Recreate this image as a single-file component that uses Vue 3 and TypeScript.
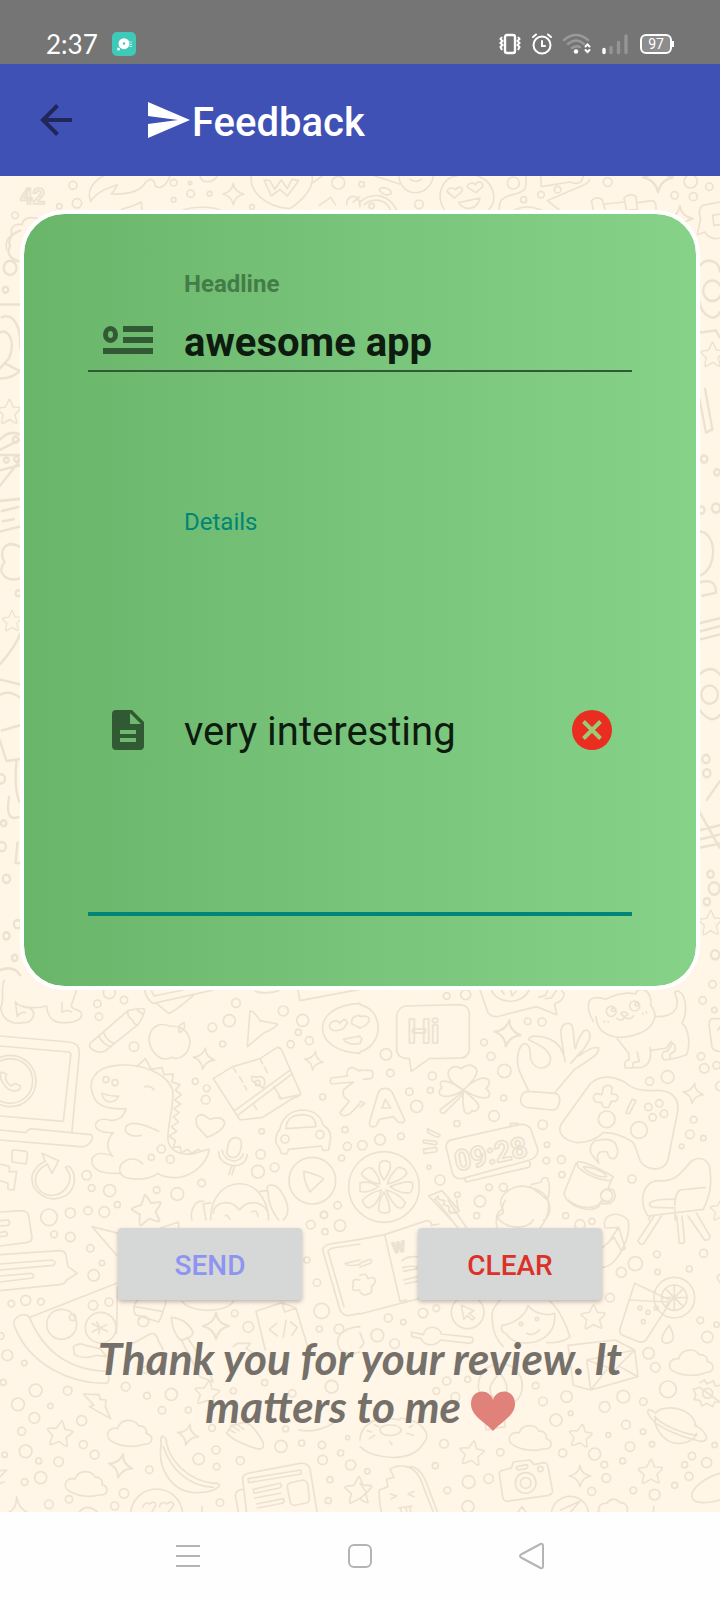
<script setup lang="ts">
import { ref } from 'vue'

type Dot = [number, number, number]
interface Stamp {
  shape: 'sparkle' | 'star' | 'cloud'
  x: number
  y: number
  size: number
  turn: number
}
interface Label {
  text: string
  x: number
  y: number
  size: number
  turn: number
}
interface Patch {
  place: string
  dots: Dot[]
  lines: string[]
  stamps: Stamp[]
  labels: Label[]
}

const headline = ref('awesome app')
const details = ref('very interesting')

function clearAll(): void {
  headline.value = ''
  details.value = ''
}

const shapes: Record<Stamp['shape'], string> = {
  sparkle: 'M0 -32Q3 -6 32 0Q6 5 0 32Q-5 6 -32 0Q-5 -5 0 -32Z',
  star: 'M0 -42Q3 -44 13 -17L38 -15Q44 -12 21 8L28 34Q28 41 2 24L-24 38Q-31 38 -22 9L-41 -8Q-44 -14 -14 -16Z',
  cloud: 'M-52 30C-76 20 -70 -12 -38 -10C-30 -44 14 -42 24 -22C44 -26 52 -8 48 -2C76 6 70 32 44 32C20 44 -24 44 -52 30Z',
}

const st = (shape: Stamp['shape'], x: number, y: number, size = 1, turn = 0): Stamp => ({ shape, x, y, size, turn })

const patches: Patch[] = [
  {
    place: 'translate(0 170) scale(.3333)',
    dots: [[219, 46, 12], [231, 100, 14], [178, 109, 8], [45, 136, 10], [521, 38, 10], [570, 39, 5], [572, 71, 11], [629, 71, 7], [521, 89, 7], [756, 111, 7], [1015, 38, 19]],
    lines: [
      'M310 18C270 40 262 70 272 94C290 66 320 56 352 44C345 60 336 70 334 72C390 74 425 60 436 38C450 22 462 26 466 48C480 60 500 46 510 18',
      'M600 18C604 42 640 40 652 18M545 122C580 108 640 108 668 124M364 118L398 108L424 96L426 120',
      'M754 18C748 60 790 110 870 116C910 90 944 50 936 18M936 40L966 18',
      'M792 30L814 78L840 58L862 78L896 32L876 28L862 56L844 30L824 58L810 32Z',
      'M20 240C14 210 28 200 36 196C28 170 44 160 66 164C70 138 100 140 124 150',
      'M958 106L992 82L1006 104M1040 104C1036 76 1080 64 1080 110M1080 80L1060 96',
    ],
    stamps: [st('sparkle', 700, 72)],
    labels: [{ text: '42', x: 60, y: 102, size: 66, turn: 0 }],
  },
  {
    place: 'translate(360 170) scale(.3333)',
    dots: [[5, 43, 8], [177, 103, 13], [460, 39, 18], [543, 74, 10], [491, 89, 9], [593, 59, 10], [743, 36, 13], [992, 34, 20], [1048, 50, 11], [944, 76, 11], [1000, 80, 12], [35, 108, 8]],
    lines: [
      'M44 18L118 42M116 18C124 86 210 84 220 18M150 28Q170 40 184 28',
      'M58 60C60 46 92 54 94 70C80 80 66 72 58 60Z',
      'M0 96C40 62 90 74 110 122M12 104C44 80 82 90 92 122',
      'M254 122C222 70 252 22 290 18M352 18C402 34 416 90 384 122M262 66C262 50 284 52 286 60C298 44 314 54 304 66L284 84ZM322 52C322 36 344 38 346 44C358 28 374 38 366 52L348 68ZM296 98L360 84C354 118 314 126 296 98Z',
      'M498 18C500 60 500 64 450 76C416 88 418 100 418 122M460 122Q500 100 548 122M542 18L544 50L630 36Q664 50 670 18M688 28Q690 40 650 54L562 92L598 120',
      'M694 92Q710 78 726 88L736 120M700 120L694 92M734 102L794 96M792 84Q810 66 828 80L832 118L800 122ZM832 98L878 92Q890 96 888 120',
      'M1080 96L1028 106Q1012 120 1022 146L1012 194L1034 186Q1052 212 1080 204M1080 132L1058 136L1062 166L1080 164',
    ],
    stamps: [st('sparkle', 894, 22, 1.4), st('sparkle', 960, 146, 1.2)],
    labels: [],
  },
  {
    place: 'translate(0 980) scale(.3333)',
    dots: [[292, 71, 11], [328, 38, 18], [372, 60, 11], [297, 110, 11], [402, 200, 14], [708, 69, 13], [637, 142, 13], [688, 122, 18], [668, 192, 9], [850, 93, 15], [908, 121, 18], [895, 157, 9], [872, 193, 11], [928, 182, 12], [586, 304, 9], [620, 325, 10], [617, 359, 13], [968, 351, 9], [785, 454, 8], [484, 507, 12], [454, 532, 9], [511, 538, 12], [782, 523, 14], [774, 575, 19], [824, 562, 13], [605, 609, 11], [260, 586, 14], [275, 624, 10], [329, 632, 18], [352, 674, 9], [470, 630, 10], [532, 642, 19], [1035, 449, 9], [1042, 499, 12], [1025, 534, 9], [1013, 676, 11], [972, 705, 10], [211, 699, 15], [264, 692, 12], [313, 696, 16], [147, 712, 25], [31, 303, 77], [31, 303, 67], [318, 299, 9], [345, 308, 9], [937, 602, 70], [773, 309, 8], [855, 477, 12], [960, 464, 12]],
    lines: [
      'M12 0C0 30 16 60 2 82C4 116 36 136 66 128C98 130 112 100 90 84Q60 82 46 66L52 110Q62 94 76 98M66 78Q100 88 140 78C142 108 158 128 188 128C222 128 250 120 244 98C234 84 214 92 214 76L230 30M186 68L186 96Q204 88 214 96',
      'M270 190L384 92Q426 82 434 88Q434 104 414 134L314 214C290 222 264 206 270 190ZM384 92Q380 110 398 120Q402 136 414 134M296 168Q310 196 334 200M310 156Q320 184 344 190M412 90L430 104',
      'M508 138C460 118 430 170 458 212C478 240 500 240 516 232C540 244 570 220 570 182C562 144 536 138 508 138ZM538 158Q530 136 552 128Q560 146 538 158Z',
      'M434 30Q440 60 460 70L640 30M454 32L462 48L550 30M470 70L506 100Q520 98 580 46',
      'M742 200L750 94Q760 90 780 122L832 132Q836 138 790 160Z',
      'M0 168L208 186Q240 190 238 220L216 454M0 198L206 216Q214 218 212 228L190 424L0 408M0 450L76 458L90 446L272 464Q280 466 276 480L266 492Q256 502 240 500L0 480',
      'M4 276C-4 290 8 316 26 328C44 338 62 332 62 318L44 310L34 318Q18 308 16 292L20 282Z',
      'M378 386C342 388 296 384 282 352C260 308 280 262 350 256C420 250 500 276 518 330C524 380 500 440 504 480C508 516 550 528 584 520Q614 510 628 508C620 560 560 600 510 592Q482 588 474 580C440 604 370 604 360 576C350 546 400 520 428 552M378 386Q370 420 334 422Q304 412 290 426C276 448 306 460 340 458C316 484 320 510 338 528Q290 510 276 536C272 574 310 582 360 580M306 340Q330 350 356 348Q346 370 322 364Q308 358 306 340ZM434 320Q452 316 462 330M424 466C390 474 370 456 378 440C394 420 440 436 476 454',
      'M410 260L436 236L454 268L486 262L492 284L520 282L516 306L540 314L526 330L544 344L524 360L542 372L522 386L538 398L520 410L536 426L514 440L530 454L508 468L526 482L520 502L540 500L544 518L564 508L574 520L596 508L604 514',
      'M640 296L698 260L780 236L832 202Q842 202 846 212L902 340Q900 350 880 354L788 412L720 420ZM704 392L868 272M716 404L876 282M822 320L844 356L902 344M790 324L758 304Q748 282 766 292Q796 284 794 310Z',
      'M698 260L708 276M718 290L728 306M734 318L740 330M780 236L788 252M794 262L802 278M762 376L770 388M836 348L842 358',
      'M622 472L592 440Q580 404 608 404Q624 412 630 418Q668 406 674 428Q672 452 622 472Z',
      'M686 490Q694 466 718 476Q730 486 720 516C710 540 684 536 680 516ZM656 514C654 562 736 576 742 524M666 510C672 548 720 554 730 522M696 556L686 584M704 558L696 584',
      'M840 446C846 410 876 390 910 390C950 392 964 414 970 436Q998 452 990 486L986 510L970 512L964 498L866 508L860 522L844 520L838 504Q816 480 840 446ZM858 446C860 412 880 406 908 404C940 406 946 420 948 440Z',
      'M36 516Q36 508 46 510L78 514Q84 516 82 528L78 552L36 546ZM0 552L28 560L28 576L50 574L42 630L24 628L24 610L0 602',
      'M126 520L176 542L156 580L142 552C108 570 94 600 118 630C140 654 180 650 198 624C218 598 210 580 196 562Q204 554 214 566C234 600 220 640 186 652C140 668 90 634 96 588Q106 556 136 544Z',
      'M912 574Q910 602 930 636L970 598Q970 590 912 574Z',
      'M1080 274L1056 262Q1038 264 1042 288L994 294Q986 302 996 312L1060 306L1030 330Q1024 350 1048 364L1020 398Q1026 414 1050 402L1080 370',
      'M1080 70C930 76 930 214 1080 220M1030 146C990 164 976 134 1000 124Q1014 120 1020 130Q1036 108 1042 130ZM1030 178L1080 168M1030 178Q1044 198 1080 190M1080 106Q1050 108 1056 132L1080 144',
      'M632 720C630 580 800 570 806 720M640 700C640 664 694 656 718 690C750 650 800 670 806 706M632 668L610 672L618 720M610 664C580 660 570 700 576 720M780 634L804 632C790 610 826 610 840 630C866 666 872 700 850 720M804 636Q804 680 836 720M676 708Q680 700 690 718M756 696Q772 686 774 710',
      'M894 30L900 62L1080 28M766 34Q800 44 836 32',
    ],
    stamps: [st('sparkle', 612, 236, 1, 8), st('sparkle', 942, 242, 0.9, 10)],
    labels: [],
  },
  {
    place: 'translate(360 980) scale(.3333)',
    dots: [[78, 223, 17], [91, 279, 11], [372, 187, 10], [393, 229, 12], [217, 288, 12], [211, 331, 9], [148, 335, 11], [170, 379, 18], [433, 273, 20], [431, 354, 9], [402, 408, 16], [291, 431, 9], [548, 434, 14], [60, 479, 16], [123, 469, 10], [7, 496, 14], [207, 562, 6], [240, 600, 15], [292, 644, 8], [387, 622, 10], [430, 622, 12], [360, 664, 17], [350, 707, 9], [561, 494, 8], [559, 542, 10], [604, 539, 12], [606, 584, 9], [816, 597, 12], [617, 707, 9], [503, 124, 10], [546, 126, 12], [317, 44, 15], [260, 48, 10], [869, 304, 12], [923, 291, 19], [1023, 229, 11], [1033, 265, 14], [1070, 256, 11], [1058, 13, 11], [1028, 61, 11], [1063, 90, 8], [1001, 419, 10], [990, 463, 13], [1030, 474, 8], [965, 499, 7], [740, 418, 25], [837, 450, 25], [898, 370, 11], [865, 381, 11], [912, 401, 11], [878, 412, 11], [754, 94, 15], [824, 78, 15], [760, 89, 5], [830, 73, 5], [740, 647, 18], [72, 621, 106]],
    lines: [
      'M140 78L300 74Q326 76 328 100L328 210Q324 234 300 234L208 236L154 274L148 236Q112 236 110 210L110 110Q112 80 140 78Z',
      'M0 74C70 90 76 190 0 216M0 110Q28 104 28 120Q26 134 0 144M0 190L6 176L0 172',
      'M310 330C270 310 260 286 266 272Q280 252 304 266Q330 244 350 268Q356 290 310 330C340 300 370 286 386 300Q392 312 378 326Q396 340 384 352Q360 360 310 330C330 350 360 368 356 382Q350 398 336 392Q324 408 314 396Q306 370 310 330C280 352 246 354 238 340Q236 330 246 324Q236 310 246 304Q270 300 310 330ZM306 338L240 390Q242 404 254 398L310 342',
      'M360 30L384 98Q394 114 420 108L530 80L590 104L584 72Q614 60 612 40L604 30M394 30C410 70 480 80 508 30M424 30L432 42M452 30L456 48L468 34M536 52L556 46L564 30M556 56L574 54L590 30',
      'M506 334C490 290 460 264 478 208Q488 184 502 194C514 206 510 220 512 238C526 276 570 270 572 236C566 200 520 190 506 178Q510 164 542 170C590 176 610 206 616 246M612 220C600 160 596 128 626 130C646 130 638 180 646 206Q656 170 672 152Q690 146 690 170C688 190 668 210 656 228Q700 196 716 204Q718 220 690 238L644 268L586 336M632 250L664 214M506 334L586 340Q604 346 598 368Q594 392 576 390L500 382Q480 376 482 358Q484 334 506 334Z',
      'M700 124C680 90 680 60 700 54Q720 50 736 58Q790 32 826 42Q836 20 860 34Q876 50 872 76C900 110 880 150 820 166C760 184 710 160 708 110M782 100Q796 90 804 104L792 110ZM770 114Q784 128 794 112Q810 122 820 108M732 124L734 126M744 124L746 126M848 100L850 102M858 96L860 98M886 110C950 112 962 78 944 38Q956 24 970 48Q986 90 966 130C990 150 990 200 980 224Q950 236 912 240C900 226 910 210 922 214Q940 190 934 184M772 176L806 220L808 240Q790 240 796 264L846 262Q880 250 870 202M832 216L838 244L820 248L818 264M870 212L920 204L930 188Q950 190 944 214L930 222L930 236',
      'M604 432L690 312Q730 274 794 306Q820 334 880 332C940 326 964 360 950 410L924 540Q914 570 880 566C826 558 842 520 818 486Q770 456 730 458Q700 488 650 488C610 480 590 460 604 432ZM730 322Q746 310 756 322L754 342L770 344Q780 354 766 364L754 364L746 382Q726 388 726 368L708 366Q692 354 708 340L726 344ZM816 358L828 362L808 402L798 398Z',
      'M80 326Q62 322 54 340L28 430Q30 446 48 438L58 418L100 410L114 426Q134 432 134 420L98 340Q92 328 80 326ZM66 384L76 358L92 384ZM0 270L36 272Q44 290 32 296L10 298M0 382L14 370L0 364',
      'M258 500Q260 480 280 478L476 434Q500 430 512 446L534 510Q532 532 510 540L306 596Q286 598 278 582ZM314 596L318 606L506 562Q516 552 508 546M450 438L452 430L474 430',
      'M202 446L240 464Q240 474 228 470L204 458ZM190 480L228 484Q236 494 222 494L190 488ZM190 508L226 502Q238 508 226 516L192 520Z',
      'M60 548Q74 536 90 548Q96 570 72 600Q52 574 60 548ZM114 562Q142 564 140 582Q124 602 82 612Q88 586 114 562ZM90 620Q140 600 158 608Q160 632 150 638Q118 642 90 620ZM78 630Q118 640 136 668Q130 690 112 682Q92 664 78 630ZM72 636Q92 674 88 696Q70 704 56 692Q54 664 72 636ZM64 630Q56 672 28 684Q10 680 8 660Q32 636 64 630ZM56 620Q20 642 0 634V608Q30 602 56 620ZM60 612Q20 606 4 582Q16 560 34 564Q58 586 60 612Z',
      'M206 648L246 632L298 692L286 700L266 694L268 680L250 674L254 662L236 658L234 648L220 662M206 648L274 720',
      'M430 690C400 650 460 610 500 620C550 630 568 650 570 688Q564 720 550 720M514 614L544 606Q544 590 562 594Q574 620 564 654M510 620Q540 640 560 658M424 690Q408 700 410 720',
      'M648 550L612 640C620 680 690 700 716 680L726 660M746 622L756 596M652 546C680 540 740 580 760 590Q756 606 736 600C700 596 644 566 652 546ZM670 560C700 560 740 580 740 590C720 594 676 574 670 560ZM724 640Q740 618 760 630C776 660 750 680 720 668M716 550L702 532C680 510 694 480 720 480Q750 474 766 490Q782 520 764 536Q744 538 742 516Q714 510 712 530Z',
      'M848 660Q850 610 890 602C960 610 970 560 1000 540Q1030 526 1048 556C1060 620 1044 660 1030 688L864 708Q850 690 848 660ZM944 676Q946 640 960 630L1036 622M944 658Q880 656 868 670Q868 684 888 682L946 684M944 690L946 720M870 710L866 720',
      'M1080 116L1056 116Q1046 120 1048 140L1056 200Q1060 214 1080 214M1080 304Q1064 310 1068 326L1080 334M1080 140L1074 150',
    ],
    stamps: [st('sparkle', 443, 160, 1.25, 8), st('sparkle', 1000, 340, 0.95, 8), st('star', 1084, 690, 0.8)],
    labels: [
      { text: 'Hi', x: 142, y: 188, size: 100, turn: 0 },
      { text: '09:28', x: 290, y: 574, size: 86, turn: -12 },
    ],
  },
  {
    place: 'translate(0 1200) scale(.3333)',
    dots: [[162, 103, 10], [211, 111, 14], [271, 145, 11], [306, 189, 8], [281, 226, 17], [34, 311, 10], [77, 301, 15], [123, 305, 10], [279, 316, 14], [327, 306, 12], [185, 373, 45], [218, 352, 10], [302, 383, 46], [22, 466, 16], [73, 489, 8], [2, 408, 10], [10, 547, 9], [54, 613, 19], [107, 571, 19], [203, 572, 13], [151, 618, 8], [103, 654, 16], [65, 694, 12], [245, 662, 15], [250, 734, 12], [284, 764, 13], [77, 754, 19], [14, 764, 8], [176, 785, 14], [116, 783, 9], [122, 833, 18], [74, 846, 10], [207, 898, 11], [147, 913, 13], [372, 880, 14], [344, 918, 12], [377, 560, 13], [441, 587, 10], [436, 509, 10], [514, 583, 18], [486, 631, 11], [565, 630, 9], [636, 684, 10], [648, 750, 12], [596, 777, 17], [650, 800, 10], [721, 782, 12], [448, 809, 11], [660, 908, 11], [745, 381, 16], [704, 340, 10], [965, 333, 23], [958, 387, 9], [1017, 387, 14], [951, 248, 11], [921, 180, 9], [700, 573, 9], [794, 548, 9], [877, 580, 11], [857, 687, 9], [843, 739, 18], [905, 729, 9], [966, 735, 11], [968, 780, 14], [1022, 759, 9], [1043, 713, 6], [1052, 795, 15], [990, 839, 9], [985, 902, 9], [995, 560, 19], [932, 74, 13], [972, 44, 11], [1020, 77, 17], [975, 95, 9], [430, 364, 16], [470, 945, 78]],
    lines: [
      'M0 36L66 32Q84 34 86 48L96 112Q96 126 80 128L0 138M0 62L24 60Q34 68 24 76L0 78M0 98L16 94Q28 102 18 108L0 110',
      'M0 164L178 152Q196 152 198 166L204 200L232 220L200 240Q196 252 178 254L0 272M0 192L156 180Q172 186 160 196L0 210M0 228L92 220Q106 226 98 234L0 246',
      'M350 166L276 80L356 100M482 84L536 66L536 84M350 250L90 352M352 260L350 400M44 380C30 350 80 330 90 356C130 450 200 510 320 514Q334 540 320 550C220 552 90 500 44 380ZM276 370L300 384L320 374M276 396L300 384L296 402M300 384L322 394M300 384L290 366M220 440Q240 426 256 436L300 446L320 470L290 466Q250 480 224 464Z',
      'M412 302Q394 320 406 344L476 366Q490 340 498 304M406 320L486 334M416 360Q426 340 446 360M546 304C570 340 680 340 700 304M400 430L450 402Q470 396 474 420L490 450',
      'M514 352Q518 400 542 420Q584 412 578 394Q560 356 514 352ZM544 420L600 530L640 546L620 500L562 412',
      'M768 334L846 308L888 324L924 444M768 334L796 450M846 308L854 336L888 324M830 370L808 388L832 408M872 366L892 382L876 406M858 362L850 412M700 440L712 430L752 430L738 446L760 460',
      'M968 150Q970 136 990 132L1080 118M968 150L1020 330Q1030 350 1050 346L1080 340M984 154L1032 320M984 154Q988 146 1000 144L1080 132M1036 190L1080 180M1036 192Q1040 200 1080 194M1080 240Q1054 232 1060 256Q1050 276 1080 270M1080 380C1024 384 1000 414 1020 448Q1040 468 1080 456',
      'M250 582L298 584L300 598L318 600L316 620L332 656L268 620L282 616Z',
      'M486 708Q480 720 484 730C470 800 510 870 580 878Q640 880 658 858Q660 848 640 850C560 840 510 780 500 730Q498 708 486 708ZM490 740C510 800 560 860 640 862',
      'M680 700L696 676L716 672Q740 660 760 684C790 720 800 742 780 748C740 740 700 720 680 700ZM686 688L706 698M692 676L718 692M706 670L732 688',
      'M740 940L728 836Q728 824 744 820L900 790Q924 788 930 806L952 940M744 836L902 810L904 822L746 848ZM760 868L840 850Q850 858 838 864L762 880ZM764 894L842 880M770 912L850 896Q856 902 848 910L772 924M862 862Q860 850 880 846L910 840Q922 842 924 856L928 896Q928 908 914 910L886 916Q872 918 870 902ZM716 940L706 886Q708 868 732 868',
      'M428 922Q434 904 448 912Q464 900 468 914L454 940M478 920Q484 900 500 912Q516 900 522 914L502 940M0 812L20 810L0 830M0 850L12 846M20 940Q50 930 50 890Q56 930 90 940M238 936Q260 908 292 936M606 940V920M896 690Q950 700 1000 670',
    ],
    stamps: [st('sparkle', 648, 378, 1.25), st('sparkle', 564, 704, 1, 12), st('sparkle', 362, 798, 1.15, 12), st('star', 180, 702, 0.95, 8), st('star', 622, 580, 0.9, 8), st('star', 1076, 872, 1), st('star', 442, 30, 1.1, -10), st('cloud', 390, 698, 1, 4), st('cloud', 260, 850, 0.95, 6)],
    labels: [],
  },
  {
    place: 'translate(360 1200) scale(.3333)',
    dots: [[660, 74, 15], [696, 64, 9], [784, 217, 15], [826, 191, 21], [891, 163, 10], [893, 216, 8], [988, 207, 9], [1031, 160, 12], [750, 293, 13], [85, 354, 12], [130, 366, 8], [189, 339, 14], [229, 325, 10], [52, 406, 19], [104, 431, 14], [323, 337, 49], [1021, 361, 10], [1070, 374, 8], [1042, 411, 17], [886, 502, 14], [866, 460, 17], [924, 568, 25], [850, 605, 11], [790, 590, 19], [734, 621, 16], [798, 674, 13], [849, 695, 8], [876, 733, 8], [810, 740, 14], [745, 705, 7], [788, 783, 9], [733, 794, 10], [704, 762, 18], [608, 759, 12], [588, 660, 18], [632, 640, 7], [620, 590, 17], [549, 604, 13], [527, 557, 10], [252, 731, 13], [421, 757, 11], [226, 797, 9], [386, 836, 14], [326, 846, 19], [262, 871, 10], [22, 814, 8], [324, 920, 18], [695, 874, 12], [739, 834, 13], [820, 871, 10], [884, 884, 16], [944, 856, 9], [987, 829, 12], [974, 794, 9], [996, 768, 11], [1040, 788, 15], [1064, 735, 8], [260, 543, 12], [323, 538, 9], [229, 573, 10], [286, 591, 13], [483, 372, 5], [531, 357, 5], [497, 849, 31], [497, 849, 16], [541, 807, 8], [421, 557, 66], [943, 293, 61], [943, 293, 38], [840, 324, 6], [889, 324, 6], [864, 337, 6], [850, 365, 6], [1043, 580, 15], [630, 945, 56]],
    lines: [
      'M0 118L74 104L200 62Q216 62 214 76L236 72M74 104L120 304M0 342L200 290M0 190L30 178Q40 180 30 190L0 202M120 304L140 300M126 182Q140 168 172 170M128 204Q140 196 172 200M130 214L172 206M132 240L172 230M134 252L172 244',
      'M0 226Q20 216 24 236Q46 226 46 246Q40 258 34 258Q40 280 24 282Q10 290 0 276M0 398L12 430L0 444',
      'M228 0L294 84M264 0L320 84M270 40L296 34L290 0',
      'M412 84Q400 50 430 40C420 10 440 0 436 0M564 0C570 30 560 60 540 84M410 50C440 90 500 90 520 60M624 0C660 30 710 30 730 0L750 10M736 84C720 40 780 30 804 60C816 110 770 200 728 202M736 84L776 82L796 146L784 152L762 112L728 142M776 82L744 130',
      'M884 46L834 122Q840 138 852 130L904 48M950 48L958 128Q970 134 974 124L966 48M984 48L1034 120Q1050 122 1050 108L1010 40',
      'M304 316L342 332L328 340L344 354L336 360L322 346L312 358Z',
      'M420 302C390 330 396 350 398 370Q400 410 430 440M426 376C470 370 500 340 504 316C520 340 560 350 584 340C590 400 540 440 470 426Q446 416 440 402Q420 396 426 376ZM500 400Q520 410 538 390M570 304C600 330 620 380 630 410Q610 430 560 428',
      'M154 396L190 404C200 370 240 380 244 402L336 412Q346 424 330 430L242 420C220 444 190 434 184 416L156 410Z',
      'M824 250L934 302L858 420Q846 430 832 424L788 406Q776 400 780 386ZM806 300L926 306M943 255V331M905 293H981M916 266L970 320M916 320L970 266',
      'M928 376C900 410 900 430 922 430C950 424 940 400 928 376Z',
      'M624 436L766 420L824 450L834 530L692 570L640 556ZM680 480L824 450M680 480L692 570M680 480L764 510L824 450M692 570L740 510M834 530L780 500',
      'M1020 548L1034 540L1040 552L1060 542L1066 558L1080 556M1080 606L1064 606L1058 620L1040 610L1026 618L1020 602L1002 598L1008 584L1000 568L1020 562Z',
      'M886 650C880 690 920 734 960 730C1000 726 1010 706 1010 700M886 640C910 610 1000 620 1008 680M882 636Q860 620 864 640C880 680 960 710 1020 724Q1046 724 1038 706Q1028 688 1004 674M884 650C900 670 960 700 1010 706',
      'M390 560Q406 530 420 520Q446 550 440 580Q450 608 420 606Q390 600 390 560ZM404 600L380 640M372 640L378 690L436 680L430 640',
      'M0 740C40 780 160 790 190 730C220 700 180 660 120 654M120 660C30 640 0 690 0 720M60 690C60 670 118 670 124 690C120 710 60 714 60 690ZM22 692L34 696M28 716L44 706M88 724L96 734M140 700L160 706M148 682L158 676M44 674L56 680',
      'M58 870Q56 900 64 936M58 870L84 860L80 838L102 832L90 808Q110 794 140 800Q176 810 190 860L220 936M150 800Q180 800 200 850L232 936M92 882L110 888L94 896M162 874L144 882L162 890M116 924L156 918M122 924L124 936M138 922L140 936M150 920L152 936',
      'M418 822Q418 812 430 810L454 804L460 786L510 780L522 794L550 788Q562 788 564 800L578 874Q576 884 566 886L442 904Q430 904 428 890ZM472 800L500 794Q508 800 498 806L474 810Q466 806 472 800Z',
      'M602 930L660 904L632 936M0 850L20 878L0 896M474 936L486 920L498 936M716 936Q714 908 740 910Q760 886 780 908Q806 908 802 936M880 936L882 920M1080 820C1040 830 980 870 1000 900Q1020 916 1080 900',
      'M1080 222Q1064 230 1080 248',
    ],
    stamps: [st('star', 700, 352, 0.9), st('star', 662, 708, 0.85, 8), st('star', 336, 760, 0.9, 8), st('star', 872, 816, 0.9), st('sparkle', 660, 828, 1), st('cloud', 512, 712, 0.95, 6), st('cloud', 994, 486, 0.98)],
    labels: [{ text: 'W', x: 100, y: 160, size: 44, turn: -10 }],
  },
  {
    place: 'translate(0 200) scale(.459 .51)',
    dots: [[22, 133, 14], [12, 176, 6], [34, 470, 6], [14, 510, 5], [36, 508, 5], [40, 771, 6], [2, 1135, 9], [8, 1222, 6], [4, 1268, 9], [14, 1331, 8], [38, 1420, 8], [14, 1443, 7], [32, 1486, 6], [1528, 608, 7], [1560, 604, 9], [1534, 508, 7], [1562, 534, 6], [1546, 970, 18], [1538, 1096, 8], [1540, 1124, 8], [1548, 1322, 7], [1556, 1350, 12], [1540, 1376, 7], [1558, 1480, 9], [1552, 178, 20]],
    lines: [
      'M44 60Q14 70 22 90Q10 110 40 120M0 205L44 205M4 230C30 220 46 250 44 290M0 260C20 250 34 280 20 310L0 330M0 350Q28 350 44 334M10 320L44 336',
      'M0 490L44 470M0 500L44 500M0 530L44 520M0 560L44 510M0 470Q20 450 44 460M0 590L44 586M4 610L40 602M6 630L30 626M0 650L44 640',
      'M44 680C10 664 -4 690 10 710C-10 730 14 750 44 742M0 910C20 890 36 870 44 850M0 940L44 950M0 970Q20 960 44 976M4 1040L44 1030M0 1060L14 1100L44 1096M36 1100Q30 1150 42 1180M20 1170Q10 1220 40 1210M38 1260L34 1300L44 1300M0 1510Q30 1500 44 1520',
      'M1524 130C1540 110 1568 120 1568 140M1524 200C1530 230 1560 240 1568 220M1526 260L1560 256L1568 270M1524 390L1538 456L1552 450L1536 370M1524 650C1560 650 1566 720 1526 736M1524 750Q1560 740 1560 770L1530 776M1524 830L1568 820M1524 846L1568 836M1524 862L1568 852M1524 930Q1550 910 1568 930M1524 1000Q1550 1030 1568 1010M1524 1200L1568 1270M1524 1236L1568 1226M1524 1254L1568 1244M1524 1270L1568 1262M1540 1176L1568 1140',
    ],
    stamps: [st('star', 20, 416, 0.6), st('star', 26, 826, 0.5), st('star', 1552, 304, 0.6), st('star', 1548, 1418, 0.6)],
    labels: [],
  },
]
</script>

<template>
  <div class="screen">
    <header class="status">
      <div class="status-side">
        <time class="clock">2:37</time>
        <svg class="icon24" viewBox="0 0 24 24" aria-hidden="true">
          <rect width="24" height="24" rx="5" fill="#3fc9b8" />
          <circle cx="12" cy="11.700" r="5.500" fill="#fff" />
          <circle cx="6.500" cy="17" r="1.500" fill="#fff" />
          <circle cx="12" cy="11.500" r="1.200" fill="#3fc9b8" />
          <path d="M17.500 10h2.500M18 12.500h2M17.500 14.500h2.500" stroke="#b9eee6" />
        </svg>
      </div>
      <div class="status-side status-icons">
        <svg width="24" height="24" viewBox="0 0 24 24" fill="none" stroke="#fff" aria-hidden="true">
          <rect x="7" y="3" width="10" height="18" rx="2" stroke-width="2.400" />
          <path d="M4 5L2.500 7L4.500 9L2.500 11L4.500 13L2.500 15L4 18M20 5L21.500 7L19.500 9L21.500 11L19.500 13L21.500 15L20 18" stroke-width="2" />
        </svg>
        <svg width="24" height="24" viewBox="0 0 24 24" fill="none" stroke="#fff" stroke-width="2" stroke-linecap="round" aria-hidden="true">
          <circle cx="12" cy="13" r="8.500" />
          <path d="M12 9v5h3M3 5l3-2.500M21 5l-3-2.500" />
        </svg>
        <svg width="30" height="24" viewBox="0 0 30 24" fill="none" stroke="#999" stroke-width="2.400" stroke-linecap="round" aria-hidden="true">
          <path d="M2 8Q14-2 26 8M6 12Q14 5 22 12M10 16q4-3 8-1" />
          <circle cx="14" cy="19.500" r="2.200" fill="#fff" stroke="none" />
          <path d="M23.500 14.500L25.500 12.500L27.500 14.500M23.500 18L25.500 20L27.500 18" stroke="#fff" stroke-width="2" />
        </svg>
        <svg width="28" height="24" viewBox="0 0 28 24" stroke="#959595" stroke-width="3.400" stroke-linecap="round" aria-hidden="true">
          <path d="M4 17.500v3" stroke="#fff" />
          <path d="M11 15.500v5M18.500 10.500v10M26 4v16.500" />
        </svg>
        <span class="battery">97</span>
      </div>
    </header>

    <nav class="toolbar">
      <button class="plain back" type="button" aria-label="Back">
        <svg width="32" height="32" viewBox="0 0 32 32" fill="none" stroke="#20285b" stroke-width="4" aria-hidden="true">
          <path d="M32 16H3M17.500 1.500L3 16l14.500 14.500" />
        </svg>
      </button>
      <svg class="plane" width="42" height="36" viewBox="0 0 42 36" fill="#fff" aria-hidden="true">
        <path d="M0 0L42 18L0 36V22L30 18L0 14Z" />
      </svg>
      <h1>Feedback</h1>
    </nav>

    <main>
      <svg class="wallpaper" viewBox="0 176 720 1336" preserveAspectRatio="xMidYMin slice" aria-hidden="true">
        <g v-for="(p, i) in patches" :key="i" :transform="p.place">
          <path v-for="(d, j) in p.lines" :key="'l' + j" :d="d" />
          <circle v-for="(c, j) in p.dots" :key="'d' + j" :cx="c[0]" :cy="c[1]" :r="c[2]" />
          <path
            v-for="(s, j) in p.stamps"
            :key="'s' + j"
            :d="shapes[s.shape]"
            :transform="`translate(${s.x} ${s.y}) rotate(${s.turn}) scale(${s.size})`"
          />
          <text
            v-for="(t, j) in p.labels"
            :key="'t' + j"
            :font-size="t.size"
            :transform="`translate(${t.x} ${t.y}) rotate(${t.turn})`"
          >{{ t.text }}</text>
        </g>
      </svg>

      <form class="form" @submit.prevent>
        <section class="card">
          <div class="field">
            <label class="strong" for="headline">Headline</label>
            <div class="row">
              <svg class="lead" width="50" height="28" viewBox="0 0 50 28" fill="#315934" aria-hidden="true">
                <path d="M20 0h30v6H20zM20 11h30v6H20zM0 22h50v6H0z" />
                <ellipse cx="7.500" cy="8.500" rx="5" ry="6" fill="none" stroke="#315934" stroke-width="5" />
              </svg>
              <input id="headline" v-model="headline" class="strong" type="text" />
            </div>
          </div>
          <div class="field details">
            <label for="details">Details</label>
            <div class="row">
              <svg class="lead" width="50" height="40" viewBox="0 0 50 40" fill="#315934" aria-hidden="true">
                <path fill-rule="evenodd" d="M13 0h16l12 12v24q0 4-4 4H13q-4 0-4-4V4q0-4 4-4zM27 3v11h11zM17 20v4h16v-4zM17 28v4h16v-4z" />
              </svg>
              <textarea id="details" v-model="details" rows="1"></textarea>
              <button class="plain wipe" type="button" aria-label="Clear details" @click="details = ''">
                <svg width="40" height="40" viewBox="0 0 40 40" aria-hidden="true">
                  <circle cx="20" cy="20" r="20" fill="#e92d20" />
                  <path d="M11.500 11.500l17 17M28.500 11.500l-17 17" stroke="#9bcb78" stroke-width="4" />
                </svg>
              </button>
            </div>
          </div>
        </section>

        <div class="actions">
          <button class="send" type="submit">SEND</button>
          <button class="clear" type="button" @click="clearAll">CLEAR</button>
        </div>
      </form>

      <p class="thanks">
        Thank you for your review. It matters to me
        <svg class="heart" width="44" height="40" viewBox="0 0 44 40" role="img" aria-label="heart">
          <path d="M22 9C19-3 0-3 0 13C0 25 15 32 22 40C29 32 44 25 44 13C44-3 25-3 22 9Z" fill="#e0827a" />
        </svg>
      </p>
    </main>

    <footer class="system">
      <button class="plain" type="button" aria-label="Recent apps">
        <svg width="28" height="28" viewBox="0 0 28 28" fill="none" stroke="#b4b4b4" stroke-width="2" aria-hidden="true">
          <path d="M2 4h24M2 14h24M2 24h24" />
        </svg>
      </button>
      <button class="plain" type="button" aria-label="Home">
        <svg width="28" height="28" viewBox="0 0 28 28" fill="none" stroke="#b4b4b4" stroke-width="2" aria-hidden="true">
          <rect x="3" y="3" width="22" height="22" rx="5" />
        </svg>
      </button>
      <button class="plain" type="button" aria-label="Back to previous app">
        <svg width="28" height="28" viewBox="0 0 28 28" fill="none" stroke="#b4b4b4" stroke-width="2" stroke-linejoin="round" aria-hidden="true">
          <path d="M3 12.500L22.500 2Q25 1 25 4V24Q25 27 22.500 26L3 15.500Q1 14 3 12.500Z" />
        </svg>
      </button>
    </footer>
  </div>
</template>

<style>
body {
  margin: 0;
}
</style>

<style scoped>
.screen {
  display: flex;
  flex-direction: column;
  min-height: 100vh;
  font-family: Roboto, "Liberation Sans", sans-serif;
}
svg {
  display: block;
  flex: none;
}
.plain {
  display: flex;
  padding: 0;
  border: 0;
  background: none;
}
.status {
  display: flex;
  justify-content: space-between;
  align-items: flex-end;
  height: 64px;
  padding: 0 48px 8px 46px;
  box-sizing: border-box;
  background: #757575;
  color: #fff;
}
.status-side {
  display: flex;
  align-items: center;
  gap: 14px;
  height: 24px;
}
.status-icons {
  gap: 8px;
}
.clock {
  font: 26px/24px Lato, sans-serif;
}
.icon24 {
  width: 24px;
  height: 24px;
}
.battery {
  position: relative;
  width: 32px;
  height: 20px;
  margin-left: 4px;
  box-sizing: border-box;
  border: 2px solid #fff;
  border-radius: 6px;
  background: #8d8d8d;
  font-size: 14px;
  line-height: 16px;
  text-align: center;
}
.battery::after {
  content: "";
  position: absolute;
  right: -4px;
  top: 5px;
  width: 2px;
  height: 6px;
  background: #fff;
}
.toolbar {
  display: flex;
  align-items: center;
  height: 112px;
  padding: 0 40px;
  background: #3f51b5;
}
.plane {
  margin-left: 76px;
}
h1 {
  margin: 0 0 0 2px;
  padding-top: 6px;
  color: #fff;
  font-size: 40px;
  font-weight: 500;
  line-height: 48px;
}
main {
  position: relative;
  flex: 1;
  padding: 34px 20px 80px;
  background: #fff6e8;
  overflow: hidden;
}
.wallpaper {
  position: absolute;
  inset: 0;
  width: 100%;
  height: 100%;
  fill: none;
  stroke: #ede2cf;
  stroke-width: 5;
  stroke-linejoin: round;
  stroke-linecap: round;
  font-family: Roboto, sans-serif;
  font-weight: 700;
}
.form,
.thanks {
  position: relative;
}
.card {
  padding: 56px 64px 70px;
  border: 4px solid #fff;
  border-radius: 44px;
  background: linear-gradient(90deg, #69b66b, #87d289) padding-box;
}
.field {
  border-bottom: 2px solid #315934;
  padding-bottom: 6px;
}
.field label {
  display: block;
  margin-left: 96px;
  color: #447c47;
  font-size: 24px;
  line-height: 28px;
}
.field .strong {
  font-weight: 700;
}
.row {
  display: flex;
  align-items: center;
  height: 48px;
  margin-top: 18px;
  padding: 0 20px 0 15px;
}
.lead {
  margin-right: 31px;
}
.row input,
.row textarea {
  flex: 1;
  min-width: 0;
  height: 52px;
  box-sizing: border-box;
  margin: 0;
  padding: 4px 0 0;
  border: 0;
  outline: 0;
  resize: none;
  overflow: hidden;
  background: none;
  color: #0e1b0f;
  font-family: inherit;
  font-size: 40px;
  line-height: 48px;
}
.details {
  margin-top: 136px;
  padding-bottom: 158px;
  border-bottom: 4px solid #018577;
}
.details label {
  color: #018577;
}
.details .row {
  margin-top: 170px;
}
.actions {
  display: grid;
  grid-template-columns: 1fr 1fr;
  justify-items: center;
  margin: 238px 40px 0;
}
.actions button {
  width: 184px;
  height: 72px;
  padding: 4px 0 0;
  border: 0;
  border-radius: 4px;
  background: #d6d7d7;
  box-shadow: 0 2px 4px rgba(0, 0, 0, 0.26);
  font: 500 28px/32px Roboto, sans-serif;
}
.actions .send {
  color: #8d94f1;
}
.actions .clear {
  color: #dc3127;
}
.thanks {
  margin: 34px 60px 0;
  color: #75716a;
  font: italic 700 44px/48px Lato, sans-serif;
  text-align: center;
}
.heart {
  display: inline-block;
  vertical-align: -8px;
}
.system {
  display: flex;
  justify-content: space-between;
  align-items: center;
  height: 88px;
  padding: 0 174px;
  background: #fefefe;
}
</style>
